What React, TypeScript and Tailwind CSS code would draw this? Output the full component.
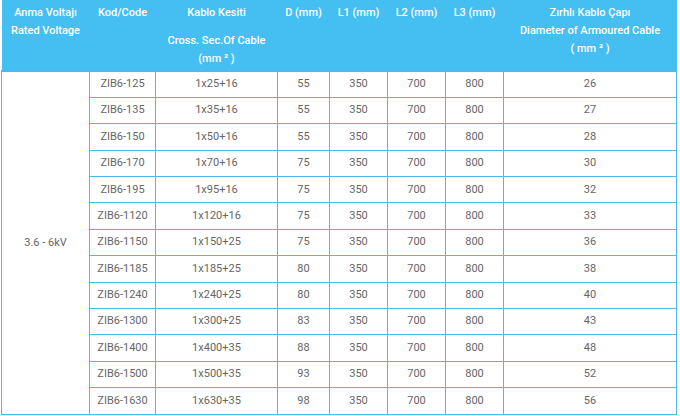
const rows = [
  ["ZIB6-125", "1x25+16", "55", "26"],
  ["ZIB6-135", "1x35+16", "55", "27"],
  ["ZIB6-150", "1x50+16", "55", "28"],
  ["ZIB6-170", "1x70+16", "75", "30"],
  ["ZIB6-195", "1x95+16", "75", "32"],
  ["ZIB6-1120", "1x120+16", "75", "33"],
  ["ZIB6-1150", "1x150+25", "75", "36"],
  ["ZIB6-1185", "1x185+25", "80", "38"],
  ["ZIB6-1240", "1x240+25", "80", "40"],
  ["ZIB6-1300", "1x300+25", "83", "43"],
  ["ZIB6-1400", "1x400+35", "88", "48"],
  ["ZIB6-1500", "1x500+35", "93", "52"],
  ["ZIB6-1630", "1x630+35", "98", "56"],
];

const th = "align-top pt-[4px] font-medium text-white leading-[18px]";
const td = "border border-[#4cbbea] text-center";

const App = () => {
  return (
    <div className="w-[680px] h-[416px] bg-white overflow-hidden pl-[1px] font-['Roboto',sans-serif] text-[11px]">
      <table className="table-fixed border-collapse w-[675px]">
        <colgroup>
          <col className="w-[88px]" />
          <col className="w-[66px]" />
          <col className="w-[122px]" />
          <col className="w-[52px]" />
          <col className="w-[58px]" />
          <col className="w-[58px]" />
          <col className="w-[58px]" />
          <col className="w-[173px]" />
        </colgroup>
        <thead>
          <tr className="h-[71px] bg-[#45bef1] border-b-2 border-[#4cbbea]">
            <th className={th}>
              <div>Anma Voltajı</div>
              <div>Rated Voltage</div>
            </th>
            <th className={th}>Kod/Code</th>
            <th className={th}>
              <div>Kablo Kesiti</div>
              <div className="mt-[10px]">Cross. Sec.Of Cable</div>
              <div>(mm ² )</div>
            </th>
            <th className={th}>D (mm)</th>
            <th className={th}>L1 (mm)</th>
            <th className={th}>L2 (mm)</th>
            <th className={th}>L3 (mm)</th>
            <th className={th}>
              <div>Zırhlı Kablo Çapı</div>
              <div>Diameter of Armoured Cable</div>
              <div>( mm ² )</div>
            </th>
          </tr>
        </thead>
        <tbody className="text-[#666]">
          {rows.map((r, i) => (
            <tr key={r[0]} className="h-[26.4px]">
              {i === 0 && (
                <td rowSpan={13} className={td}>
                  3.6 - 6kV
                </td>
              )}
              <td className={td}>{r[0]}</td>
              <td className={td}>{r[1]}</td>
              <td className={td}>{r[2]}</td>
              <td className={td}>350</td>
              <td className={td}>700</td>
              <td className={td}>800</td>
              <td className={td}>{r[3]}</td>
            </tr>
          ))}
        </tbody>
      </table>
    </div>
  );
};

export default App;
